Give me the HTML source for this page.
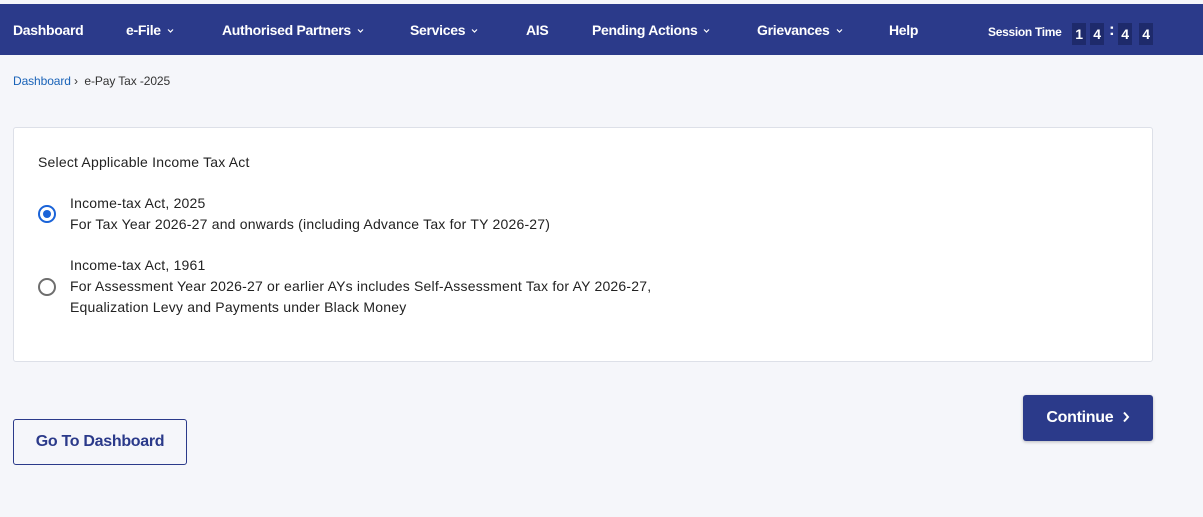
<!DOCTYPE html>
<html><head><style>
*{margin:0;padding:0;box-sizing:border-box}
body{width:1203px;height:517px;background:#f5f6fa;font-family:"Liberation Sans",sans-serif;position:relative;overflow:hidden}
.nav{position:absolute;top:4px;left:0;width:1203px;height:51px;background:#2b3a8a;color:#fff;font-weight:bold;font-size:14px;letter-spacing:-0.3px}
.nav span{position:absolute;top:18px;white-space:nowrap}
.c{display:inline-block;width:7px;height:5px;margin-left:6px;vertical-align:2px}
.d{position:absolute;top:19px;width:14px;height:22px;background:#1e2a6b;color:#fff;font-size:14px;text-align:center;line-height:22px}
.bc{position:absolute;top:74px;left:13px;font-size:12px;color:#333;letter-spacing:-0.1px}
.bc a{color:#1a63b8}
.card{position:absolute;left:13px;top:127px;width:1140px;height:235px;background:#fff;border:1px solid #dde0e8;border-radius:3px}
.t{position:absolute;font-size:14px;color:#222;line-height:21px;letter-spacing:0.2px}
.r{position:absolute;width:18px;height:18px;border-radius:50%}
.btn1{position:absolute;left:1023px;top:395px;width:130px;height:46px;background:#2b3a8a;color:#fff;border-radius:3px;font-weight:bold;font-size:16px;text-align:center;line-height:46px;box-shadow:0 1px 3px rgba(0,0,0,.25);letter-spacing:-0.3px}
.btn2{position:absolute;left:13px;top:419px;width:174px;height:46px;border:1px solid #2b3a8a;border-radius:3px;color:#2b3a8a;font-size:16px;font-weight:bold;text-align:center;line-height:44px;background:#f5f6fa;letter-spacing:-0.3px}
</style></head><body>
<div class="nav">
<span style="left:13px">Dashboard</span>
<span style="left:126px">e-File<svg class="c" viewBox="0 0 7 5"><path d="M1 1.5L3.5 4L6 1.5" stroke="#fff" stroke-width="1.2" fill="none"/></svg></span>
<span style="left:222px">Authorised Partners<svg class="c" viewBox="0 0 7 5"><path d="M1 1.5L3.5 4L6 1.5" stroke="#fff" stroke-width="1.2" fill="none"/></svg></span>
<span style="left:410px">Services<svg class="c" viewBox="0 0 7 5"><path d="M1 1.5L3.5 4L6 1.5" stroke="#fff" stroke-width="1.2" fill="none"/></svg></span>
<span style="left:526px">AIS</span>
<span style="left:592px">Pending Actions<svg class="c" viewBox="0 0 7 5"><path d="M1 1.5L3.5 4L6 1.5" stroke="#fff" stroke-width="1.2" fill="none"/></svg></span>
<span style="left:757px">Grievances<svg class="c" viewBox="0 0 7 5"><path d="M1 1.5L3.5 4L6 1.5" stroke="#fff" stroke-width="1.2" fill="none"/></svg></span>
<span style="left:889px">Help</span>
<span style="left:988px;top:21px;font-size:12px">Session Time</span>
<div class="d" style="left:1072px">1</div>
<div class="d" style="left:1090px">4</div>
<span style="left:1109px;top:16px;font-size:17px">:</span>
<div class="d" style="left:1118px">4</div>
<div class="d" style="left:1139px">4</div>
</div>
<div class="bc"><a>Dashboard</a> &rsaquo; &nbsp;e-Pay Tax -2025</div>
<div class="card"></div>
<div class="t" style="left:38px;top:152px">Select Applicable Income Tax Act</div>
<div class="r" style="left:38px;top:205px;border:2px solid #1a63d8"><div style="position:absolute;left:3px;top:3px;width:8px;height:8px;border-radius:50%;background:#1a63d8"></div></div>
<div class="t" style="left:70px;top:193px">Income-tax Act, 2025<br>For Tax Year 2026-27 and onwards (including Advance Tax for TY 2026-27)</div>
<div class="r" style="left:38px;top:278px;border:2px solid #6e6e6e"></div>
<div class="t" style="left:70px;top:255px">Income-tax Act, 1961<br>For Assessment Year 2026-27 or earlier AYs includes Self-Assessment Tax for AY 2026-27,<br>Equalization Levy and Payments under Black Money</div>
<div class="btn1">Continue &nbsp;<svg width="8" height="12" viewBox="0 0 8 12" style="vertical-align:-1px"><path d="M2 1.5L6 6L2 10.5" stroke="#fff" stroke-width="2" fill="none"/></svg></div>
<div class="btn2">Go To Dashboard</div>
</body></html>
